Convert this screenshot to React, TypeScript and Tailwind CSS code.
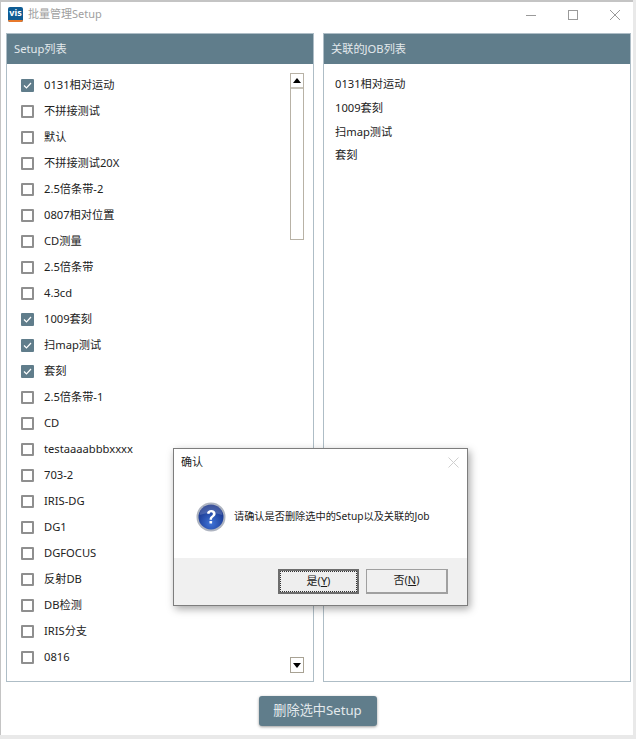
const font = { fontFamily: '"Noto Sans", "Noto Sans CJK SC", sans-serif' };

const setups = [
  { name: "0131相对运动", checked: true },
  { name: "不拼接测试" },
  { name: "默认" },
  { name: "不拼接测试20X" },
  { name: "2.5倍条带-2" },
  { name: "0807相对位置" },
  { name: "CD测量" },
  { name: "2.5倍条带" },
  { name: "4.3cd" },
  { name: "1009套刻", checked: true },
  { name: "扫map测试", checked: true },
  { name: "套刻", checked: true },
  { name: "2.5倍条带-1" },
  { name: "CD" },
  { name: "testaaaabbbxxxx" },
  { name: "703-2" },
  { name: "IRIS-DG" },
  { name: "DG1" },
  { name: "DGFOCUS" },
  { name: "反射DB" },
  { name: "DB检测" },
  { name: "IRIS分支" },
  { name: "0816" },
];

const jobs = ["0131相对运动", "1009套刻", "扫map测试", "套刻"];

function CheckBox({ checked }: { checked?: boolean }) {
  if (checked) {
    return (
      <span className="flex h-[13px] w-[13px] items-center justify-center rounded-[1px] bg-[#607d8b]">
        <svg width="11" height="11" viewBox="0 0 11 11" fill="none" stroke="#fff" strokeWidth="1.2">
          <path d="M2 5.5 L4.5 8 L9 3" />
        </svg>
      </span>
    );
  }
  return <span className="h-[13px] w-[13px] rounded-[1px] border-2 border-[#8f8f8f] bg-white" />;
}

function PanelHeader({ title }: { title: string }) {
  return (
    <div className="flex h-[30px] shrink-0 items-center bg-[#607d8b] pl-[7px] text-[11.2px] text-[#e3e9ec]">
      {title}
    </div>
  );
}

function Arrow({ up }: { up?: boolean }) {
  return (
    <svg width="8" height="5" viewBox="0 0 8 5" fill="#000">
      <path d={up ? "M4 0 L8 5 L0 5 Z" : "M0 0 L8 0 L4 5 Z"} />
    </svg>
  );
}

function QuestionIcon() {
  return (
    <svg width="30" height="30" viewBox="0 0 30 30">
      <defs>
        <radialGradient id="q" cx="50%" cy="75%" r="70%">
          <stop offset="0%" stopColor="#3f74d8" />
          <stop offset="100%" stopColor="#142f86" />
        </radialGradient>
      </defs>
      <circle cx="15" cy="15" r="14.5" fill="#aeb4c0" />
      <circle cx="15" cy="15" r="12.5" fill="url(#q)" />
      <path d="M3.5 13 A11.5 11 0 0 1 26.5 13 Q15 9 3.5 13 Z" fill="#fff" opacity="0.18" />
      <path
        d="M11 11.5 C11 9.2 13 8 15.2 8 C17.8 8 19.6 9.6 19.6 11.7 C19.6 13.4 18.5 14.3 17.3 15.2 C16.3 15.9 16 16.5 16 17.8 L13.6 17.8 C13.6 15.9 14.1 15 15.4 14 C16.4 13.2 16.9 12.7 16.9 11.8 C16.9 10.8 16.2 10.2 15.2 10.2 C14.2 10.2 13.6 10.8 13.5 11.9 Z"
        fill="#fff"
      />
      <rect x="13.5" y="19" width="2.6" height="2.6" rx="0.4" fill="#fff" />
    </svg>
  );
}

function ConfirmDialog() {
  return (
    <div className="absolute left-[173px] top-[448px] flex h-[158px] w-[295px] flex-col border border-[#7d7d7d] bg-white text-[11px] text-[#1c1c1c] shadow-[2px_3px_8px_rgba(0,0,0,0.35)]">
      <div className="flex h-[27px] shrink-0 items-center justify-between pl-[7px] pr-[8px]">
        <span>确认</span>
        <svg width="11" height="11" viewBox="0 0 11 11" stroke="#cfcfcf" strokeWidth="1">
          <path d="M0.5 0.5 L10.5 10.5 M10.5 0.5 L0.5 10.5" />
        </svg>
      </div>
      <div className="flex h-[82px] shrink-0 items-center gap-[8px] pl-[22px]">
        <QuestionIcon />
        <span className="text-[10.2px]">请确认是否删除选中的Setup以及关联的Job</span>
      </div>
      <div className="flex flex-1 items-center justify-end gap-[7px] bg-[#f0f0f0] pb-[1px] pr-[19px]">
        <button className="flex h-[25px] w-[81px] items-center justify-center border-2 border-[#6d6d6d] bg-[#eeeeee] outline-1 -outline-offset-3 outline-dotted outline-[#333]">
          是(<span className="underline">Y</span>)
        </button>
        <button className="flex h-[25px] w-[82px] items-center justify-center border border-b-2 border-r-2 border-[#a0a0a0] bg-[#f0f0f0]">
          否(<span className="underline">N</span>)
        </button>
      </div>
    </div>
  );
}

export default function App() {
  return (
    <div className="relative h-[739px] w-[636px] overflow-hidden bg-[#e9e9e9]" style={font}>
      <div className="flex h-[735px] w-[633px] flex-col border-l border-t-2 border-[#c4c4c4] bg-white">
        <div className="flex h-[31px] shrink-0 items-center pb-[6px] pl-[7px]">
          <div className="flex h-[15px] w-[15px] flex-col overflow-hidden rounded-[2px] bg-[#0f5c94] text-center text-[9px] font-bold leading-[12px] text-white">
            <span className="h-[13px]">vis</span>
            <span className="h-[2px] bg-[#e8792b]" />
          </div>
          <span className="ml-[5px] text-[11px] text-[#a0a0a0]">批量管理Setup</span>
          <div className="ml-auto flex items-center gap-[32px] pr-[13px]">
            <svg width="10" height="10" viewBox="0 0 10 10" stroke="#9a9a9a">
              <path d="M0 5.5 H10" />
            </svg>
            <svg width="10" height="10" viewBox="0 0 10 10" fill="none" stroke="#9a9a9a">
              <rect x="0.5" y="0.5" width="9" height="9" />
            </svg>
            <svg width="10" height="10" viewBox="0 0 10 10" stroke="#9a9a9a">
              <path d="M0 0 L10 10 M10 0 L0 10" />
            </svg>
          </div>
        </div>

        <div className="flex h-[649px] shrink-0 gap-[9px] pl-[5px]">
          <section className="flex w-[308px] flex-col border border-[#aebdc6]">
            <PanelHeader title="Setup列表" />
            <div className="flex flex-1 pl-[14px] pr-[9px] pt-[8px]">
              <ul className="flex-1">
                {setups.map((item) => (
                  <li key={item.name} className="flex h-[26px] items-center gap-[10px] text-[11.2px] text-[#222]">
                    <CheckBox checked={item.checked} />
                    <span>{item.name}</span>
                  </li>
                ))}
              </ul>
              <div className="flex w-[14px] flex-col justify-between pt-[1px]">
                <div className="flex h-[167px] flex-col border border-[#b8b2a6]">
                  <div className="flex h-[15px] items-center justify-center border-b-2 border-[#c8c4ba]">
                    <Arrow up />
                  </div>
                </div>
                <div className="mb-[8px] flex h-[16px] items-center justify-center border border-[#a8a294]">
                  <Arrow />
                </div>
              </div>
            </div>
          </section>

          <section className="flex w-[308px] flex-col border border-[#aebdc6]">
            <PanelHeader title="关联的JOB列表" />
            <ul className="pl-[11px] pt-[9px] text-[11.2px] text-[#222]">
              {jobs.map((job) => (
                <li key={job} className="flex h-[23.6px] items-center">
                  {job}
                </li>
              ))}
            </ul>
          </section>
        </div>

        <div className="flex flex-1 justify-center pl-[1px] pt-[14px]">
          <button className="h-[30px] w-[118px] rounded-[3px] bg-[#607d8b] text-[13.2px] text-[#e3e9ec] shadow-[0_1px_3px_rgba(0,0,0,0.4)]">
            删除选中Setup
          </button>
        </div>
      </div>

      <ConfirmDialog />
    </div>
  );
}
